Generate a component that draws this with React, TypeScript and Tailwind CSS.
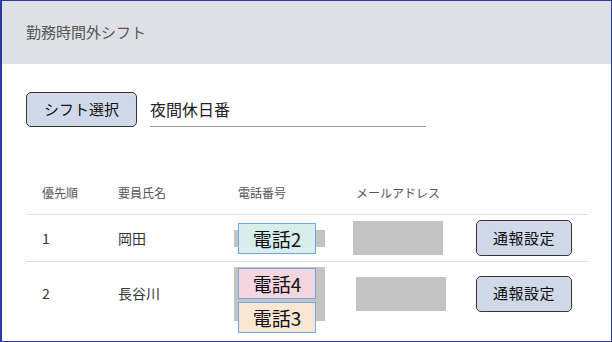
import React from "react";

const jp = { fontFamily: '"Noto Sans CJK JP", "Noto Sans", sans-serif' };

type Phone = { label: string; bg: string; top: string };

type Member = {
  order: number;
  name: string;
  rowCls: string;
  barH: string;
  mailPad: string;
  phones: Phone[];
};

const members: Member[] = [
  {
    order: 1,
    name: "岡田",
    rowCls: "h-[47px] border-b border-[#ddd]",
    barH: "h-[17px]",
    mailPad: "pl-[13px]",
    phones: [{ label: "電話2", bg: "bg-[#d6eeec]", top: "top-[-7px]" }],
  },
  {
    order: 2,
    name: "長谷川",
    rowCls: "h-[63px]",
    barH: "h-[54px]",
    mailPad: "pl-4",
    phones: [
      { label: "電話4", bg: "bg-[#f3d6df]", top: "top-[1px]" },
      { label: "電話3", bg: "bg-[#f9e6d3]", top: "top-[35px]" },
    ],
  },
];

export default function App() {
  return (
    <div
      className="w-[612px] h-[342px] overflow-hidden bg-white border border-l-2 border-[#2b38a6] flex flex-col"
      style={jp}
    >
      {/* Header */}
      <div className="h-[63px] shrink-0 bg-[#dfe0e5] flex items-center px-6">
        <h1 className="text-[15px] text-[#555]">勤務時間外シフト</h1>
      </div>

      <div className="px-6 pt-7">
        {/* Shift select */}
        <div className="flex items-center gap-[13px]">
          <button className="w-[111px] h-[35px] rounded-[5px] border border-[#333] bg-[#d0d9e8] text-[15px] text-[#111]">
            シフト選択
          </button>
          <div className="w-[276px] h-[34px] border-b border-[#999] flex items-center text-[16px] text-[#222]">
            夜間休日番
          </div>
        </div>

        {/* Table */}
        <div className="mt-[43px] w-[562px]">
          <div className="h-[45px] flex items-center border-b border-[#ddd] text-[12px] text-[#555] pt-[1px]">
            <div className="w-[76px] pl-4">優先順</div>
            <div className="w-[120px] pl-4">要員氏名</div>
            <div className="w-[118px] pl-4">電話番号</div>
            <div className="w-[120px] pl-4">メールアドレス</div>
            <div className="w-[128px]" />
          </div>

          {members.map((m) => (
            <div
              key={m.order}
              className={`${m.rowCls} flex items-center text-[14px] text-[#333]`}
            >
              <div className="w-[76px] pl-4">{m.order}</div>
              <div className="w-[120px] pl-4">{m.name}</div>
              <div className="w-[118px] pl-3">
                <div className={`relative w-[91px] ${m.barH} bg-[#c3c3c3]`}>
                  {m.phones.map((p) => (
                    <div
                      key={p.label}
                      className={`absolute left-1 ${p.top} w-[78px] h-[31px] ${p.bg} border border-[#74a6e6] flex items-center justify-center text-[19px] text-[#111] leading-none`}
                    >
                      {p.label}
                    </div>
                  ))}
                </div>
              </div>
              <div className={`w-[120px] ${m.mailPad}`}>
                <div className="w-[90px] h-[34px] bg-[#c3c3c3]" />
              </div>
              <div className="w-[128px] pl-4">
                <button className="w-[96px] h-[36px] rounded-[5px] border border-[#333] bg-[#d0d9e8] text-[15px] text-[#111] tracking-[0.5px]">
                  通報設定
                </button>
              </div>
            </div>
          ))}
        </div>
      </div>
    </div>
  );
}
